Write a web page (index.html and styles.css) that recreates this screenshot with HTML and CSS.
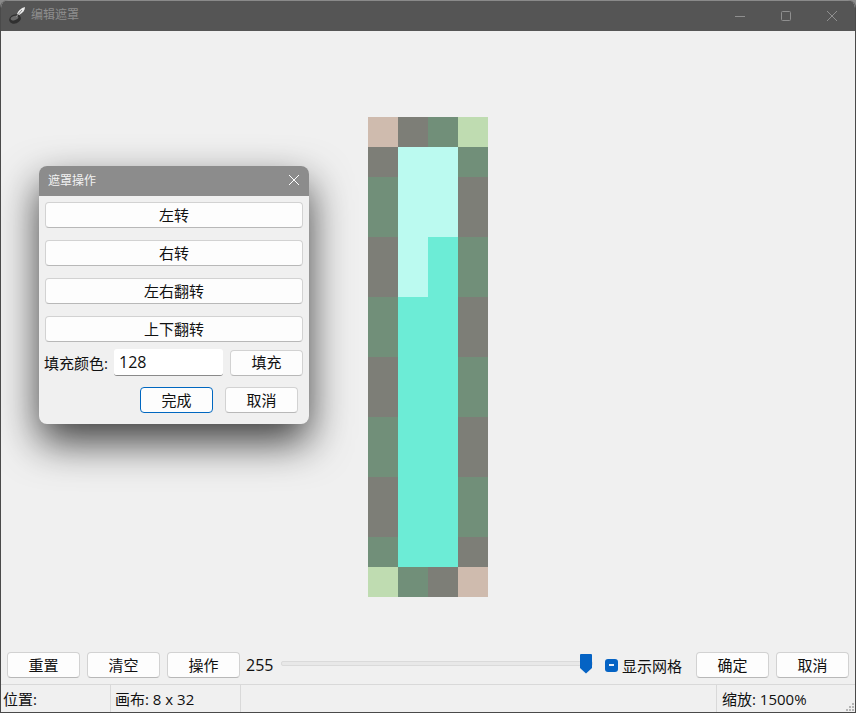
FILE: index.html
```html
<!DOCTYPE html>
<html lang="zh-CN">
<head>
    <meta charset="UTF-8">
    <title>编辑遮罩</title>
    <link rel="stylesheet" href="styles.css">
</head>
<body>
    <div class="window">
        <header class="titlebar">
            <svg class="app-icon" width="20" height="20" viewBox="0 0 20 20">
                <ellipse cx="6" cy="13" rx="6" ry="4.500" transform="rotate(-20 6 13)" fill="#303030"/>
                <ellipse cx="5.500" cy="12" rx="4" ry="2" transform="rotate(-20 5.500 12)" fill="#6a6a6a"/>
                <path d="M8 8 C9 5 12 2 16 1 C16 4 14 7 10 9 Z" fill="#ececec"/>
                <path d="M7 11 L13 4" stroke="#8a8a8a" stroke-width="1"/>
            </svg>
            <span class="title-text">编辑遮罩</span>
            <div class="win-controls">
                <svg width="46" height="30" viewBox="0 0 46 30"><path d="M18 15.500 H28" stroke="#8f8f8f"/></svg>
                <svg width="46" height="30" viewBox="0 0 46 30"><rect x="18.500" y="10.500" width="9" height="9" rx="1" fill="none" stroke="#8f8f8f"/></svg>
                <svg width="46" height="30" viewBox="0 0 46 30"><path d="M18 10 L28 20 M28 10 L18 20" stroke="#8f8f8f"/></svg>
            </div>
        </header>

        <main class="canvas-area">
            <div class="mask-grid">
                <div class="tan"></div><div class="gray"></div><div class="green"></div><div class="lime"></div>
                <div class="gray"></div><div class="pale"></div><div class="pale"></div><div class="green"></div>
                <div class="green"></div><div class="pale"></div><div class="pale"></div><div class="gray"></div>
                <div class="green"></div><div class="pale"></div><div class="pale"></div><div class="gray"></div>
                <div class="gray"></div><div class="pale"></div><div class="aqua"></div><div class="green"></div>
                <div class="gray"></div><div class="pale"></div><div class="aqua"></div><div class="green"></div>
                <div class="green"></div><div class="aqua"></div><div class="aqua"></div><div class="gray"></div>
                <div class="green"></div><div class="aqua"></div><div class="aqua"></div><div class="gray"></div>
                <div class="gray"></div><div class="aqua"></div><div class="aqua"></div><div class="green"></div>
                <div class="gray"></div><div class="aqua"></div><div class="aqua"></div><div class="green"></div>
                <div class="green"></div><div class="aqua"></div><div class="aqua"></div><div class="gray"></div>
                <div class="green"></div><div class="aqua"></div><div class="aqua"></div><div class="gray"></div>
                <div class="gray"></div><div class="aqua"></div><div class="aqua"></div><div class="green"></div>
                <div class="gray"></div><div class="aqua"></div><div class="aqua"></div><div class="green"></div>
                <div class="green"></div><div class="aqua"></div><div class="aqua"></div><div class="gray"></div>
                <div class="lime"></div><div class="green"></div><div class="gray"></div><div class="tan"></div>
            </div>

            <section class="dialog">
                <div class="dialog-title">
                    <span>遮罩操作</span>
                    <svg width="12" height="12" viewBox="0 0 12 12"><path d="M1 1 L11 11 M11 1 L1 11" stroke="#fff"/></svg>
                </div>
                <div class="dialog-body">
                    <button class="btn btn-wide">左转</button>
                    <button class="btn btn-wide">右转</button>
                    <button class="btn btn-wide">左右翻转</button>
                    <button class="btn btn-wide">上下翻转</button>
                    <div class="fill-row">
                        <label>填充颜色:</label>
                        <input class="fill-input" type="text" value="128">
                        <button class="btn">填充</button>
                    </div>
                    <div class="dialog-actions">
                        <button class="btn btn-default">完成</button>
                        <button class="btn">取消</button>
                    </div>
                </div>
            </section>
        </main>

        <div class="toolbar">
            <button class="btn">重置</button>
            <button class="btn">清空</button>
            <button class="btn">操作</button>
            <span class="value">255</span>
            <div class="slider">
                <div class="slider-track"></div>
                <svg class="slider-thumb" width="12" height="20" viewBox="0 0 12 20"><path d="M1 0 H11 A1 1 0 0 1 12 1 V14 L6 19.500 L0 14 V1 A1 1 0 0 1 1 0 Z" fill="#0563c4"/></svg>
            </div>
            <span class="check-box"><span class="check-dash"></span></span>
            <span class="check-label">显示网格</span>
            <button class="btn btn-ok">确定</button>
            <button class="btn">取消</button>
        </div>

        <footer class="statusbar">
            <div class="status-pos">位置:</div>
            <div class="status-size">画布: 8 x 32</div>
            <div class="status-gap"></div>
            <div class="status-zoom">缩放: 1500%</div>
            <svg class="grip" width="10" height="10" viewBox="0 0 10 10" fill="#b5b5b5">
                <rect x="7" y="1" width="2" height="2"/>
                <rect x="4" y="4" width="2" height="2"/><rect x="7" y="4" width="2" height="2"/>
                <rect x="1" y="7" width="2" height="2"/><rect x="4" y="7" width="2" height="2"/><rect x="7" y="7" width="2" height="2"/>
            </svg>
        </footer>
    </div>
</body>
</html>
```

FILE: styles.css
```css
* {
    box-sizing: border-box;
}
html, body {
    height: 100%;
}
body {
    margin: 0;
    background-color: #8a8a8a;
    font-family: "Open Sans", "Noto Sans CJK SC", sans-serif;
    font-size: 15px;
    color: #111;
    overflow: hidden;
}
.window {
    display: flex;
    flex-direction: column;
    height: 713px;
    background-color: #f0f0f0;
    border: 1px solid #4a4a4a;
    border-top: none;
    border-radius: 8px 8px 0 0;
    overflow: hidden;
}
.titlebar {
    display: flex;
    align-items: center;
    height: 31px;
    flex-shrink: 0;
    padding-left: 8px;
    background-color: #555555;
    border-top: 1px solid #8a8a8a;
}
.app-icon {
    margin-right: 2px;
}
.title-text {
    margin-bottom: 4px;
    font-size: 12px;
    color: #8e8e8e;
}
.win-controls {
    display: flex;
    margin-left: auto;
}

/* main canvas */
.canvas-area {
    position: relative;
    flex: 1;
    padding-top: 86px;
}
.mask-grid {
    display: grid;
    grid-template-columns: repeat(4, 30px);
    grid-auto-rows: 30px;
    width: 120px;
    margin-left: 367px;
}
.tan { background-color: #cfbbae; }
.gray { background-color: #7d7e77; }
.green { background-color: #718f79; }
.lime { background-color: #bfdcb1; }
.pale { background-color: #bbfaf0; }
.aqua { background-color: #6cecd6; }

/* floating dialog */
.dialog {
    position: absolute;
    left: 38px;
    top: 135px;
    width: 270px;
    height: 258px;
    background-color: #f0f0f0;
    border-radius: 8px;
    box-shadow: 0 18px 42px rgba(0, 0, 0, 0.75);
    overflow: hidden;
}
.dialog-title {
    display: flex;
    align-items: center;
    justify-content: space-between;
    height: 30px;
    padding: 0 9px;
    background-color: #8c8c8c;
    color: #f2f2f2;
    font-size: 12px;
}
.dialog-title span {
    margin-bottom: 3px;
}
.dialog-title svg {
    margin-bottom: 2px;
}
.dialog-body {
    display: flex;
    flex-direction: column;
    padding: 6px 6px 0;
}
.btn {
    flex-shrink: 0;
    width: 73px;
    height: 26px;
    padding: 0;
    background-color: #fdfdfd;
    border: 1px solid #d2d2d2;
    border-bottom-color: #b8b8b8;
    border-radius: 4px;
    font-family: inherit;
    font-size: 15px;
    line-height: 1;
    color: #111;
}
.btn-wide {
    width: 258px;
    margin-bottom: 12px;
}
.btn-default {
    border: 1px solid #0067c0;
}
.fill-row {
    display: flex;
    align-items: center;
    height: 27px;
    margin-top: -5px;
}
.fill-row label {
    margin-left: -1px;
    width: 70px;
    white-space: nowrap;
}
.fill-input {
    width: 109px;
    height: 27px;
    margin-right: 7px;
    padding: 0 5px;
    background-color: #fff;
    border: none;
    border-bottom: 1px solid #8a8a8a;
    border-radius: 3px;
    font-family: inherit;
    font-size: 16px;
    color: #111;
}
.dialog-actions {
    display: flex;
    justify-content: flex-end;
    gap: 12px;
    margin-top: 11px;
    padding-right: 5px;
}

/* bottom bar */
.toolbar {
    display: flex;
    align-items: center;
    height: 34px;
    flex-shrink: 0;
    padding: 0 0 4px 6px;
}
.toolbar .btn {
    margin-right: 7px;
}
.toolbar .btn:last-child {
    margin-right: 0;
}
.value {
    width: 35px;
    margin-left: -1px;
    font-size: 16px;
}
.slider {
    position: relative;
    flex-shrink: 0;
    width: 312px;
    height: 20px;
    margin-right: 12px;
}
.slider-track {
    position: absolute;
    left: 0;
    right: 0;
    top: 6px;
    height: 5px;
    background-color: #e8e8e8;
    border: 1px solid #dadada;
    border-radius: 2px;
}
.slider-thumb {
    position: absolute;
    right: 1px;
    top: -1px;
}
.check-box {
    display: flex;
    align-items: center;
    justify-content: center;
    width: 13px;
    height: 13px;
    margin-right: 4px;
    background-color: #0563c4;
    border-radius: 3px;
}
.check-dash {
    width: 5px;
    height: 2px;
    background-color: #e8f0fa;
}
.check-label {
    width: 74px;
    white-space: nowrap;
}
.statusbar {
    position: relative;
    display: flex;
    height: 28px;
    flex-shrink: 0;
    border-top: 1px solid #d9d9d9;
    line-height: 29px;
}
.statusbar > div {
    padding-left: 2px;
    border-right: 1px solid #d9d9d9;
    white-space: nowrap;
}
.status-pos {
    width: 110px;
}
.statusbar .status-size {
    width: 130px;
    padding-left: 4px;
}
.status-gap {
    width: 476px;
}
.statusbar .status-zoom {
    flex: 1;
    padding-left: 5px;
    border-right: none;
}
.grip {
    position: absolute;
    right: 0;
    bottom: 0;
}
```
